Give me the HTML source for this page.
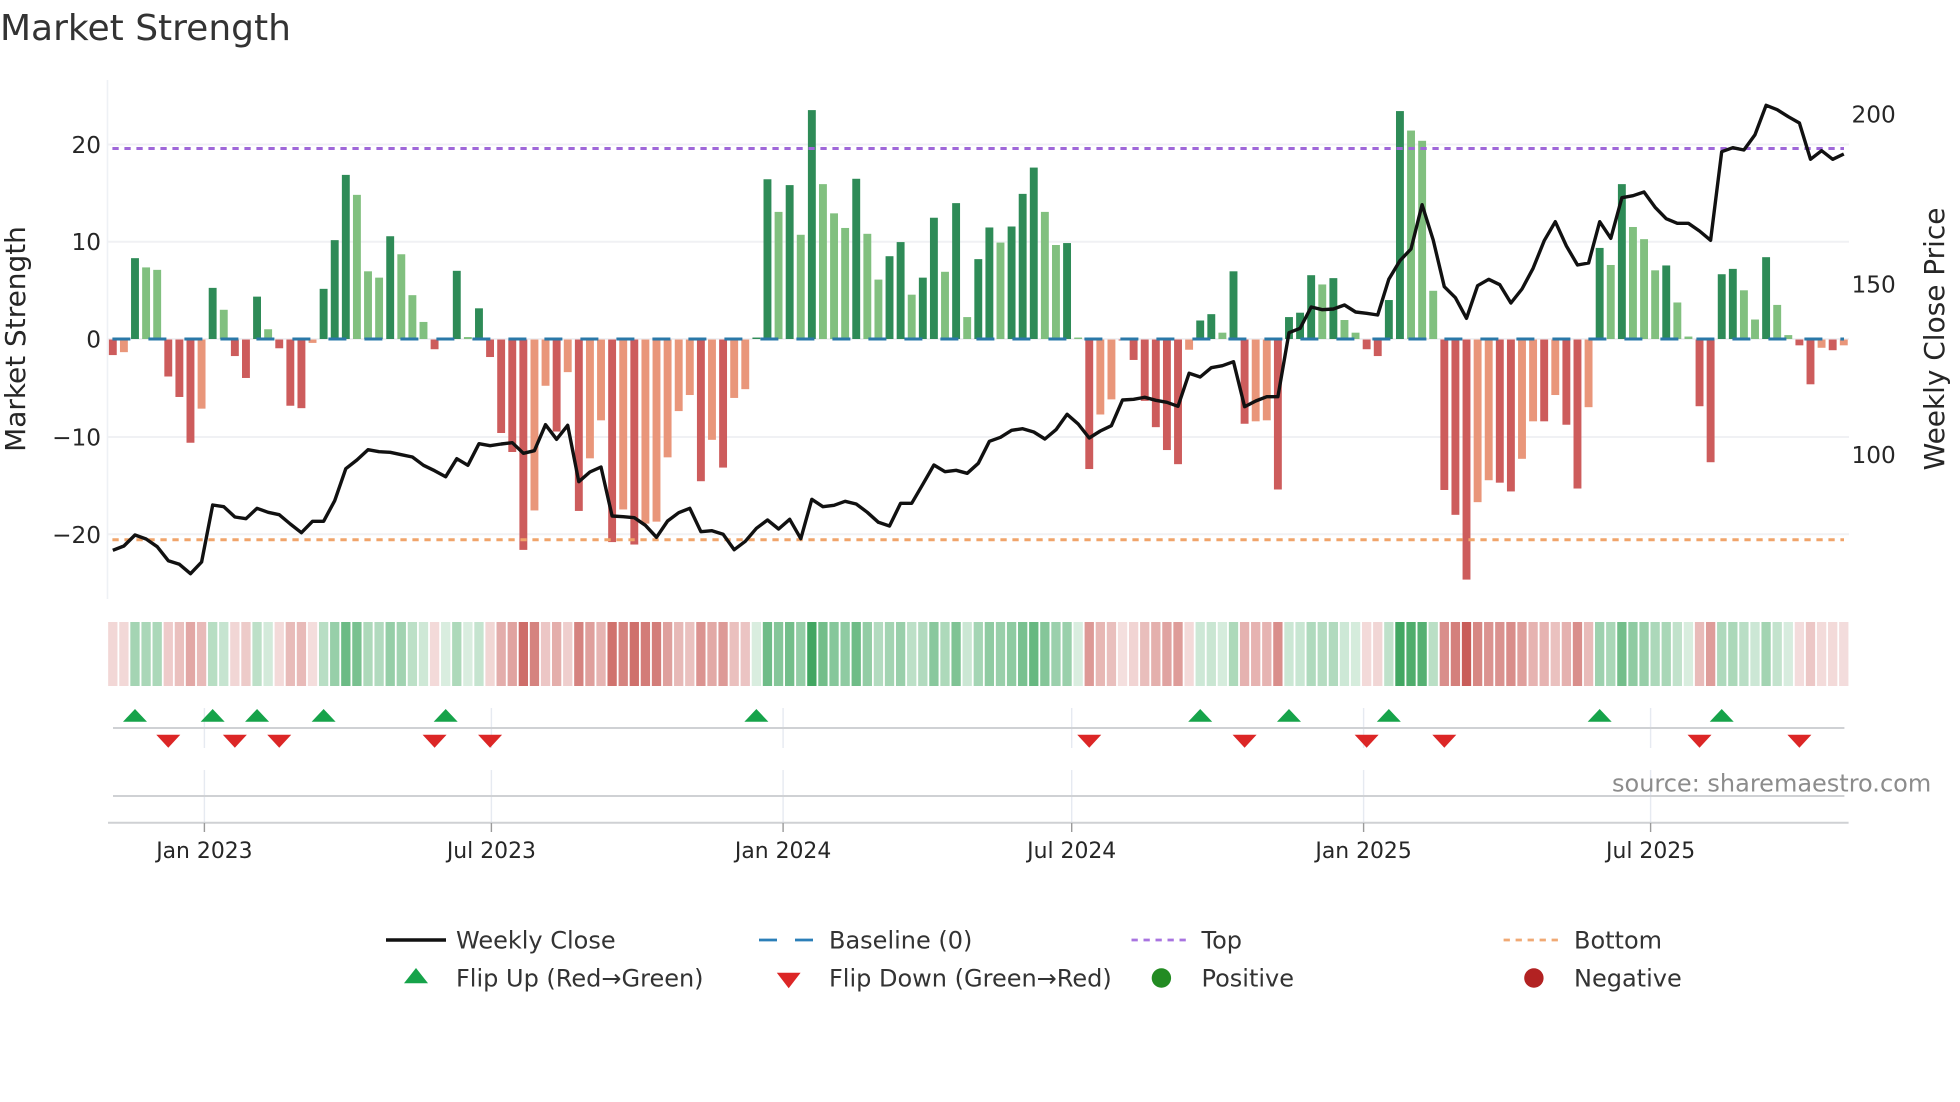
<!DOCTYPE html>
<html lang="en">
<head>
<meta charset="utf-8">
<title>Market Strength</title>
<style>
html,body{margin:0;padding:0;background:#fff;width:1960px;height:1102px;overflow:hidden}
svg{display:block}
text{font-family:"DejaVu Sans","Liberation Sans",sans-serif}
.tk{font-size:23.2px;fill:#262626}
.xt{font-size:21.9px;fill:#262626;text-anchor:middle}
.lg{font-size:24px;fill:#333}
.al{font-size:27.95px;fill:#262626;text-anchor:middle}
</style>
</head>
<body>
<svg id="c" xmlns="http://www.w3.org/2000/svg" width="1960" height="1102" viewBox="0 0 1960 1102">
<rect width="1960" height="1102" fill="#fff"/>
<text x="0" y="40" font-size="36" fill="#333">Market Strength</text>

<!-- main axes grid -->
<g stroke="#f0f1f4" stroke-width="2">
<line x1="108" x2="1849" y1="144.5" y2="144.5"/>
<line x1="108" x2="1849" y1="241.7" y2="241.7"/>
<line x1="108" x2="1849" y1="339" y2="339"/>
<line x1="108" x2="1849" y1="437" y2="437"/>
<line x1="108" x2="1849" y1="534.3" y2="534.3"/>
</g>
<line x1="107.5" x2="107.5" y1="80" y2="599" stroke="#eef1f5" stroke-width="1.6"/>

<g id="bars"></g>

<line x1="112.4" x2="1844" y1="148.5" y2="148.5" stroke="#9f67d9" stroke-width="3" stroke-dasharray="6.3 5.7"/>
<line x1="112.4" x2="1844" y1="539.7" y2="539.7" stroke="#f0a46a" stroke-width="3" stroke-dasharray="6.3 5.7"/>
<line x1="112.4" x2="1844" y1="339" y2="339" stroke="#2a78a8" stroke-width="3" stroke-dasharray="18 18"/>

<polyline id="price" fill="none" stroke="#111" stroke-width="3.4" stroke-linejoin="round" points=""/>

<!-- left ticks -->
<text class="tk" x="101" y="153" text-anchor="end">20</text>
<text class="tk" x="101" y="250.2" text-anchor="end">10</text>
<text class="tk" x="101" y="347.5" text-anchor="end">0</text>
<text class="tk" x="101" y="445.5" text-anchor="end">−10</text>
<text class="tk" x="101" y="542.8" text-anchor="end">−20</text>

<!-- right ticks -->
<text class="tk" x="1851.5" y="122.3">200</text>
<text class="tk" x="1851.5" y="292.6">150</text>
<text class="tk" x="1851.5" y="463">100</text>

<text class="al" transform="translate(25 339) rotate(-90)">Market Strength</text>
<text class="al" transform="translate(1944 339) rotate(-90)">Weekly Close Price</text>

<g id="heat"></g>

<!-- flip row verticals -->
<g stroke="#e6eaf1" stroke-width="1.4">
<line x1="204.4" x2="204.4" y1="708" y2="748"/><line x1="204.4" x2="204.4" y1="770" y2="822"/>
<line x1="491.4" x2="491.4" y1="708" y2="748"/><line x1="491.4" x2="491.4" y1="770" y2="822"/>
<line x1="783.1" x2="783.1" y1="708" y2="748"/><line x1="783.1" x2="783.1" y1="770" y2="822"/>
<line x1="1071.7" x2="1071.7" y1="708" y2="748"/><line x1="1071.7" x2="1071.7" y1="770" y2="822"/>
<line x1="1363.6" x2="1363.6" y1="708" y2="748"/><line x1="1363.6" x2="1363.6" y1="770" y2="822"/>
<line x1="1650.6" x2="1650.6" y1="708" y2="748"/><line x1="1650.6" x2="1650.6" y1="770" y2="822"/>
</g>
<g stroke="#cfd1d4" stroke-width="2">
<line x1="113" x2="1844.4" y1="728" y2="728"/>
<line x1="113" x2="1844.4" y1="796" y2="796"/>
<line x1="108" x2="1848.6" y1="822.8" y2="822.8"/>
</g>
<g id="flips"></g>

<g stroke="#9a9a9a" stroke-width="1.4">
<line x1="204.4" x2="204.4" y1="823" y2="832"/>
<line x1="491.4" x2="491.4" y1="823" y2="832"/>
<line x1="783.1" x2="783.1" y1="823" y2="832"/>
<line x1="1071.7" x2="1071.7" y1="823" y2="832"/>
<line x1="1363.6" x2="1363.6" y1="823" y2="832"/>
<line x1="1650.6" x2="1650.6" y1="823" y2="832"/>
</g>
<text class="xt" x="204.4" y="858">Jan 2023</text>
<text class="xt" x="491.4" y="858">Jul 2023</text>
<text class="xt" x="783.1" y="858">Jan 2024</text>
<text class="xt" x="1071.7" y="858">Jul 2024</text>
<text class="xt" x="1363.6" y="858">Jan 2025</text>
<text class="xt" x="1650.6" y="858">Jul 2025</text>

<text x="1612" y="791.7" font-size="24" fill="#8c8c8c">source: sharemaestro.com</text>

<!-- legend -->
<line x1="386" x2="446" y1="940" y2="940" stroke="#111" stroke-width="3.4"/>
<line x1="759" x2="813.2" y1="940" y2="940" stroke="#2b7fb8" stroke-width="2.8" stroke-dasharray="18 18"/>
<line x1="1131.5" x2="1186.6" y1="940" y2="940" stroke="#a874e0" stroke-width="2.8" stroke-dasharray="6.3 5.7"/>
<line x1="1503.6" x2="1558.6" y1="940" y2="940" stroke="#f0a974" stroke-width="2.8" stroke-dasharray="6.3 5.7"/>
<polygon points="404,983.3 428,983.3 416,968" fill="#16a34a"/>
<polygon points="776.8,972.7 800.6,972.7 788.7,988.3" fill="#dc2626"/>
<circle cx="1161.4" cy="978" r="9.7" fill="#228b22"/>
<circle cx="1533.9" cy="978" r="9.7" fill="#b22222"/>
<text class="lg" x="456" y="948.3">Weekly Close</text>
<text class="lg" x="829" y="948.3">Baseline (0)</text>
<text class="lg" x="1201.5" y="948.3">Top</text>
<text class="lg" x="1574" y="948.3">Bottom</text>
<text class="lg" x="456" y="986.7">Flip Up (Red→Green)</text>
<text class="lg" x="829" y="986.7">Flip Down (Green→Red)</text>
<text class="lg" x="1201.5" y="986.7">Positive</text>
<text class="lg" x="1574" y="986.7">Negative</text>
</svg>
<script>
(function(){
var v=[-1.6,-1.3,8.3,7.35,7.1,-3.8,-5.9,-10.6,-7.1,5.25,3.0,-1.7,-3.95,4.35,1.0,-0.9,-6.8,-7.05,-0.35,5.15,10.15,16.85,14.8,6.95,6.3,10.55,8.7,4.5,1.75,-1.0,0.15,7.0,0.2,3.15,-1.8,-9.6,-11.55,-21.6,-17.55,-4.75,-9.45,-3.35,-17.6,-12.2,-8.3,-20.8,-17.45,-21.05,-18.9,-18.7,-12.1,-7.35,-5.7,-14.55,-10.3,-13.15,-6.0,-5.1,0.15,16.4,13.05,15.8,10.7,23.5,15.9,12.9,11.4,16.45,10.8,6.1,8.5,9.95,4.55,6.3,12.45,6.9,13.95,2.25,8.2,11.45,9.9,11.55,14.9,17.6,13.05,9.65,9.85,0.15,-13.3,-7.7,-6.15,-0.1,-2.1,-6.3,-9.0,-11.35,-12.8,-1.05,1.9,2.55,0.65,6.95,-8.65,-8.4,-8.3,-15.4,2.25,2.7,6.55,5.6,6.25,1.95,0.65,-1.0,-1.7,4.0,23.4,21.4,20.35,4.95,-15.45,-18,-24.65,-16.7,-14.45,-14.7,-15.6,-12.25,-8.4,-8.4,-5.7,-8.75,-15.3,-6.95,9.35,7.6,15.9,11.5,10.25,7.05,7.55,3.75,0.25,-6.85,-12.6,6.65,7.2,5.0,2.0,8.4,3.5,0.4,-0.6,-4.6,-0.85,-1.1,-0.6];
var light=[1,3,4,8,10,14,18,22,23,24,26,27,28,30,32,38,39,41,43,44,46,48,49,50,51,52,54,56,57,60,62,64,65,66,68,69,72,75,77,80,84,85,87,89,90,97,100,103,104,109,111,112,117,118,119,123,124,127,128,130,133,135,137,138,139,141,142,147,148,150,151,154,156];
var p1=[691,678,645,657,680,722,733,761,726,555,560,591,596,565,577,584,612,638,604,604,542,446,420,389,395,397,404,411,436,452,470,416,436,371,377,372,368,400,392,314,358,316,485,456,441,588,590,593,616,652,603,578,565,635,632,643,689,664,625,600,627,598,656,538,560,556,544,552,577,607,618,550,550,493,435,455,451,460,430,364,352,331,326,336,357,329,283,312,354,333,317,240,238,232,241,247,259,160,171,143,137,125,260,243,230,230,38,25];
var p2=[921,929,927,915,936,940,945,838,782,747,614,720,860,893,955,857,838,854,909,867,805,722,665,738,795,789,665,715,593,587,576,622,656,670,670,693,721,455,443,450,404,316,329,350,369,478,452,478,462];
var NS='http://www.w3.org/2000/svg';
function el(parent,name,attrs){var e=document.createElementNS(NS,name);for(var k in attrs)e.setAttribute(k,attrs[k]);parent.appendChild(e);return e;}
function X(i){return 112.8+11.096*i;}
var isLight={};light.forEach(function(i){isLight[i]=1;});
var bars=document.getElementById('bars'),heat=document.getElementById('heat');
v.forEach(function(val,i){
  var x=X(i),col,y,h;
  if(val>=0){col=isLight[i]?'#81c07f':'#2e8b57';h=val*9.74;y=339-h;}
  else{col=isLight[i]?'#e9967a':'#cd5c5c';h=-val*9.74;y=339.5;}
  el(bars,'rect',{x:(x-3.95).toFixed(2),y:y.toFixed(2),width:7.9,height:h.toFixed(2),fill:col});
  var m=Math.abs(val)/25;
  var a=val>=0?0.18+0.78*m:0.18+0.75*m;
  el(heat,'rect',{x:(x-4.65).toFixed(2),y:622,width:9.3,height:64,fill:val>=0?'#2f9e52':'#c44f4a','fill-opacity':a.toFixed(3)});
});
var pts=[];
p1.forEach(function(Y,i){pts.push(X(i).toFixed(1)+','+(320+Y/3).toFixed(1));});
p2.forEach(function(Y,j){pts.push(X(108+j).toFixed(1)+','+(Y/3).toFixed(1));});
document.getElementById('price').setAttribute('points',pts.join(' '));
var fl=document.getElementById('flips');
[2,9,13,19,30,58,98,106,115,134,145].forEach(function(i){var x=X(i);el(fl,'polygon',{points:(x-12)+',721.7 '+(x+12)+',721.7 '+x+',709',fill:'#16a34a'});});
[5,11,15,29,34,88,102,113,120,143,152].forEach(function(i){var x=X(i);el(fl,'polygon',{points:(x-12)+',734.7 '+(x+12)+',734.7 '+x+',747.7',fill:'#dc2626'});});
})();
</script>
</body>
</html>
